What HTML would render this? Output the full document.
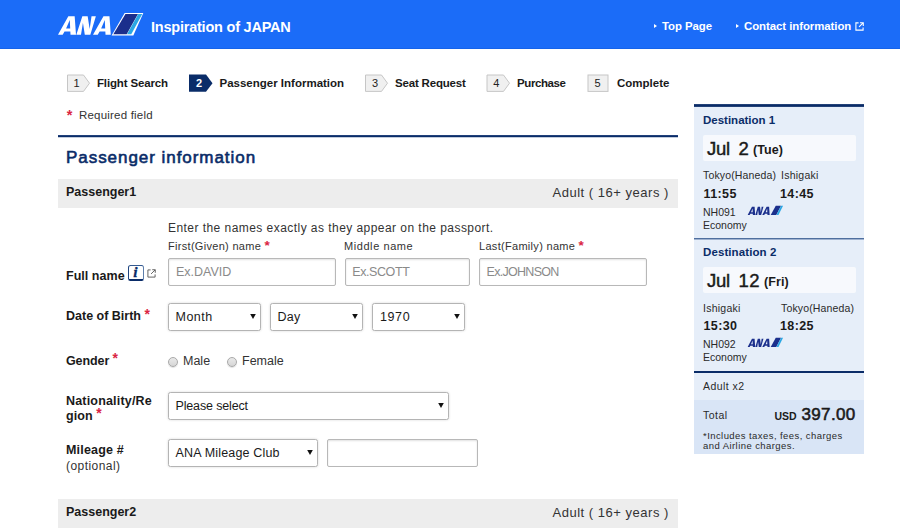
<!DOCTYPE html>
<html>
<head>
<meta charset="utf-8">
<style>
*{box-sizing:border-box;margin:0;padding:0}
html,body{width:900px;height:532px;overflow:hidden;background:#fff}
body{font-family:"Liberation Sans",sans-serif;color:#222;position:relative;font-size:12px}
.abs{position:absolute;white-space:nowrap}
#hdr{left:0;top:0;width:900px;height:49px;background:#1b6cf8;border-bottom:1px solid #1563ea}
.hl{color:#fff;font-size:11.4px;font-weight:bold;letter-spacing:-.05px}
.step{font-weight:bold;font-size:11.5px;color:#1a1a1a}
.num{font-size:11px;color:#222}
.req{color:#da2543}
.lbl .req{font-size:14px;position:relative;top:-1.5px;line-height:0;letter-spacing:0}
.bar{left:58px;width:619.5px;height:29px;background:#ededed}
.lbl{font-weight:bold;font-size:12.5px;color:#1a1a1a}
.inp{border:1px solid #b8b8b8;border-radius:2px;background:#fff;box-shadow:inset 0 1px 2px rgba(0,0,0,.12)}
.ph{color:#8a8a8a;font-size:12.5px}
.sel{border:1px solid #b4b4b4;border-radius:2.5px;background:#fff;box-shadow:0 0 2.5px rgba(0,0,0,.16)}
.st{font-size:12.5px;color:#1a1a1a}
.arr{width:5.6px;height:5px;background:#111;clip-path:polygon(0 0,100% 0,50% 100%);margin-left:.2px}
.sm{font-size:10.5px;color:#2a2a2a}
.tm{font-size:12.5px;font-weight:bold;color:#1a1a1a;letter-spacing:.4px}
.big{font-size:18.5px;color:#1a1a1a;-webkit-text-stroke:.45px #1a1a1a;letter-spacing:-.3px}
.radio{width:10px;height:10px;border-radius:50%;border:1px solid #a9a9a9;background:linear-gradient(#e9e9e9,#d6d6d6);box-shadow:0 1px 1px rgba(0,0,0,.12)}
</style>
</head>
<body>
<!-- header -->
<div id="hdr" class="abs"></div>
<svg class="abs" style="left:54px;top:10px" width="96" height="30" viewBox="0 0 1440 450">
  <g fill="#fff">
    <path fill-rule="evenodd" d="M60 370 L215 95 L310 95 L330 370 L248 370 L245 322 L158 322 L130 370 Z M181 278 L243 278 L237 150 Z"/>
    <path d="M335 370 L425 95 L505 95 L535 285 L563 95 L628 95 L545 370 L462 370 L434 190 L405 370 Z"/>
    <path fill-rule="evenodd" d="M585 370 L742 95 L832 95 L852 370 L773 370 L770 322 L684 322 L656 370 Z M707 278 L768 278 L762 150 Z"/>
    <polygon points="1060,45 1340,45 1190,381 864,381"/>
  </g>
  <polygon points="1072,60 1260,60 1090,365 890,365" fill="#1b2f8c"/>
  <polygon points="1264,60 1324,60 1159,365 1095,365" fill="#2aa7e4"/>
</svg>
<div class="abs" style="left:151px;top:19px;color:#fff;font-size:14.5px;font-weight:bold;letter-spacing:-.22px">Inspiration of JAPAN</div>
<div class="abs" style="left:654px;top:24px;width:0;height:0;border-top:2.5px solid transparent;border-bottom:2.5px solid transparent;border-left:3px solid #fff"></div>
<div class="abs hl" style="left:662px;top:20px">Top Page</div>
<div class="abs" style="left:736px;top:24px;width:0;height:0;border-top:2.5px solid transparent;border-bottom:2.5px solid transparent;border-left:3px solid #fff"></div>
<div class="abs hl" style="left:744px;top:20px">Contact information</div>
<svg class="abs" style="left:855px;top:22px" width="9" height="9" viewBox="0 0 10 10"><path d="M4 1H1v8h8V6" fill="none" stroke="#fff" stroke-width="1.2"/><path d="M5.5 0.8H9.2V4.5M9 1L4.5 5.5" fill="none" stroke="#fff" stroke-width="1.2"/></svg>

<!-- steps -->
<svg class="abs" style="left:67px;top:74px" width="610" height="18" viewBox="0 0 610 18">
  <g>
    <polygon points="0.5,1 16.5,1 22.5,9.2 16.5,17.4 0.5,17.4" fill="#f0f0f0" stroke="#c6c6c6"/>
    <polygon points="122,0.5 139,0.5 145.5,9.2 139,17.8 122,17.8" fill="#0a2c68"/>
    <polygon points="298.5,1 314.5,1 320.5,9.2 314.5,17.4 298.5,17.4" fill="#f0f0f0" stroke="#c6c6c6"/>
    <polygon points="420,1 436.5,1 442.5,9.2 436.5,17.4 420,17.4" fill="#f0f0f0" stroke="#c6c6c6"/>
    <rect x="521" y="1" width="20" height="16.4" fill="#f0f0f0" stroke="#c6c6c6"/>
  </g>
</svg>
<div class="abs num" style="left:73.5px;top:77px">1</div>
<div class="abs step" style="left:97px;top:77.4px;letter-spacing:-.15px">Flight Search</div>
<div class="abs num" style="left:196px;top:77px;color:#fff;font-weight:bold">2</div>
<div class="abs step" style="left:219.5px;top:77.4px">Passenger Information</div>
<div class="abs num" style="left:372px;top:77px">3</div>
<div class="abs step" style="left:395px;top:77.4px;letter-spacing:-.18px">Seat Request</div>
<div class="abs num" style="left:493.3px;top:77px">4</div>
<div class="abs step" style="left:517px;top:77.4px;letter-spacing:-.4px">Purchase</div>
<div class="abs num" style="left:594.5px;top:77px">5</div>
<div class="abs step" style="left:617px;top:77.4px">Complete</div>

<div class="abs req" style="left:66.8px;top:106.6px;font-size:14.5px;font-weight:bold">*</div>
<div class="abs" style="left:79px;top:109px;font-size:11.5px;color:#333;letter-spacing:.2px">Required field</div>

<!-- main -->
<div class="abs" style="left:58px;top:135px;width:619.5px;height:3px;background:linear-gradient(#21407a 0,#21407a 33%,#0a2c68 33%,#0a2c68 67%,#c3ccdc 67%)"></div>
<div class="abs" style="left:66px;top:148.4px;font-size:17px;color:#0a2c68;-webkit-text-stroke:.6px #0a2c68;letter-spacing:.95px">Passenger information</div>
<div class="abs bar" style="top:179px"></div>
<div class="abs lbl" style="left:66px;top:185.4px;font-size:12.5px">Passenger1</div>
<div class="abs" style="left:552.5px;top:185px;font-size:13px;color:#333;letter-spacing:.52px">Adult ( 16+ years )</div>

<div class="abs" style="left:168px;top:221px;font-size:12px;color:#333;letter-spacing:.45px">Enter the names exactly as they appear on the passport.</div>
<div class="abs" style="left:168px;top:240px;font-size:11px;color:#333;letter-spacing:.3px">First(Given) name <span class="req" style="font-weight:bold;font-size:13.5px;line-height:11px;position:relative;top:-.2px">*</span></div>
<div class="abs" style="left:344px;top:240px;font-size:11px;color:#333;letter-spacing:.57px">Middle name</div>
<div class="abs" style="left:479px;top:240px;font-size:11px;color:#333;letter-spacing:.3px">Last(Family) name <span class="req" style="font-weight:bold;font-size:13.5px;line-height:11px;position:relative;top:-.2px">*</span></div>

<div class="abs lbl" style="left:66px;top:268.6px;letter-spacing:.03px">Full name</div>
<div class="abs" style="left:128px;top:264.5px;width:15.5px;height:16.5px;border:1.5px solid #0a2c68;border-color:#355a90 #5d7eab #0a2c68 #1d4480;border-bottom-width:2.5px;border-radius:2.5px;background:#fff"></div>
<div class="abs" style="left:133.3px;top:263.2px;font-family:'Liberation Serif',serif;font-style:italic;font-weight:bold;font-size:15.5px;color:#0a2c68;-webkit-text-stroke:.3px #0a2c68">i</div>
<svg class="abs" style="left:147px;top:269px" width="9" height="9" viewBox="0 0 10 10"><path d="M4 1H1v8h8V6" fill="none" stroke="#555" stroke-width="1"/><path d="M5.8 0.8H9.2V4.2M9 1L4.5 5.5" fill="none" stroke="#555" stroke-width="1"/></svg>

<div class="abs inp" style="left:168px;top:258px;width:168px;height:28px"></div>
<div class="abs ph" style="left:176px;top:264.7px">Ex.DAVID</div>
<div class="abs inp" style="left:345px;top:258px;width:125px;height:28px"></div>
<div class="abs ph" style="left:352.3px;top:264.7px;letter-spacing:-.42px">Ex.SCOTT</div>
<div class="abs inp" style="left:479px;top:258px;width:168px;height:28px"></div>
<div class="abs ph" style="left:486.6px;top:264.7px;letter-spacing:-.72px">Ex.JOHNSON</div>

<div class="abs lbl" style="left:66px;top:309px;letter-spacing:0px">Date of Birth <span class="req">*</span></div>
<div class="abs sel" style="left:168px;top:303px;width:93px;height:28px"></div>
<div class="abs st" style="left:175.5px;top:309.7px;letter-spacing:.5px">Month</div>
<div class="abs arr" style="left:250px;top:314px"></div>
<div class="abs sel" style="left:270px;top:303px;width:93px;height:28px"></div>
<div class="abs st" style="left:277.5px;top:309.7px;letter-spacing:.3px">Day</div>
<div class="abs arr" style="left:352px;top:314px"></div>
<div class="abs sel" style="left:372px;top:303px;width:93px;height:28px"></div>
<div class="abs st" style="left:380px;top:309.7px;letter-spacing:.6px">1970</div>
<div class="abs arr" style="left:454px;top:314px"></div>

<div class="abs lbl" style="left:66px;top:353.6px;letter-spacing:-.1px">Gender <span class="req">*</span></div>
<div class="abs radio" style="left:168px;top:356.5px"></div>
<div class="abs st" style="left:183px;top:354px;color:#333">Male</div>
<div class="abs radio" style="left:227px;top:356.5px"></div>
<div class="abs st" style="left:242px;top:354px;color:#333">Female</div>

<div class="abs lbl" style="left:66px;top:393.6px;letter-spacing:.18px">Nationality/Re</div>
<div class="abs lbl" style="left:66px;top:408.6px;letter-spacing:.1px">gion <span class="req">*</span></div>
<div class="abs sel" style="left:168px;top:392px;width:281px;height:28px"></div>
<div class="abs st" style="left:175.5px;top:398.7px;letter-spacing:-.15px">Please select</div>
<div class="abs arr" style="left:438px;top:403px"></div>

<div class="abs lbl" style="left:66px;top:442.6px;letter-spacing:.18px">Mileage #</div>
<div class="abs" style="left:66px;top:458.5px;font-size:12px;color:#333;letter-spacing:.45px">(optional)</div>
<div class="abs sel" style="left:168px;top:439px;width:150px;height:28px"></div>
<div class="abs st" style="left:175.5px;top:445.7px;letter-spacing:.17px">ANA Mileage Club</div>
<div class="abs arr" style="left:307px;top:450px"></div>
<div class="abs inp" style="left:327px;top:439px;width:151px;height:28px"></div>

<div class="abs bar" style="top:499px"></div>
<div class="abs lbl" style="left:66px;top:505.4px;font-size:12.5px">Passenger2</div>
<div class="abs" style="left:552.5px;top:505px;font-size:13px;color:#333;letter-spacing:.52px">Adult ( 16+ years )</div>

<!-- sidebar -->
<div class="abs" style="left:694px;top:105px;width:170px;height:349px;background:#e6eef9"></div>
<div class="abs" style="left:694px;top:104px;width:170px;height:3px;background:linear-gradient(#3a5585,#0a2c68 34%,#0a2c68 66%,#3a5585)"></div>
<div class="abs" style="left:703px;top:114px;font-size:11.5px;font-weight:bold;color:#0a2c68">Destination 1</div>
<div class="abs" style="left:703px;top:135px;width:153px;height:26px;background:#f7f9fd;border-radius:2px"></div>
<div class="abs big" style="left:707px;top:137.5px">Jul</div>
<div class="abs big" style="left:738.5px;top:137.5px">2</div>
<div class="abs" style="left:753px;top:143px;font-size:12.5px;font-weight:bold;color:#1a1a1a;letter-spacing:.1px">(Tue)</div>
<div class="abs sm" style="left:703px;top:169px;letter-spacing:.15px">Tokyo(Haneda)</div>
<div class="abs sm" style="left:781px;top:169px;letter-spacing:.25px">Ishigaki</div>
<div class="abs tm" style="left:703.5px;top:187px">11:55</div>
<div class="abs tm" style="left:780px;top:187px">14:45</div>
<div class="abs sm" style="left:703px;top:206px">NH091</div>
<svg class="abs" style="left:745.5px;top:204px" width="40" height="13.5" viewBox="0 0 1440 450" preserveAspectRatio="none">
  <g fill="#1b2f8c">
    <path fill-rule="evenodd" d="M60 370 L215 95 L310 95 L330 370 L248 370 L245 322 L158 322 L130 370 Z M181 278 L243 278 L237 150 Z"/>
    <path d="M335 370 L425 95 L505 95 L535 285 L563 95 L628 95 L545 370 L462 370 L434 190 L405 370 Z"/>
    <path fill-rule="evenodd" d="M585 370 L742 95 L832 95 L852 370 L773 370 L770 322 L684 322 L656 370 Z M707 278 L768 278 L762 150 Z"/>
  </g>
  <polygon points="1072,60 1260,60 1090,365 890,365" fill="#1b2f8c"/>
  <polygon points="1264,60 1334,60 1169,365 1095,365" fill="#2aa7e4"/>
</svg>
<div class="abs sm" style="left:703px;top:218.5px">Economy</div>
<div class="abs" style="left:694px;top:238px;width:170px;height:2px;background:linear-gradient(#4f6f9f 0,#4f6f9f 50%,#9fb2d0 50%)"></div>
<div class="abs" style="left:703px;top:246px;font-size:11.5px;font-weight:bold;color:#0a2c68;letter-spacing:.1px">Destination 2</div>
<div class="abs" style="left:703px;top:267px;width:153px;height:26px;background:#f7f9fd;border-radius:2px"></div>
<div class="abs big" style="left:707px;top:269.5px">Jul</div>
<div class="abs big" style="left:738.5px;top:269.5px;letter-spacing:.4px">12</div>
<div class="abs" style="left:764px;top:275px;font-size:12.5px;font-weight:bold;color:#1a1a1a;letter-spacing:.1px">(Fri)</div>
<div class="abs sm" style="left:703px;top:301.7px;letter-spacing:.25px">Ishigaki</div>
<div class="abs sm" style="left:781px;top:301.7px;letter-spacing:.15px">Tokyo(Haneda)</div>
<div class="abs tm" style="left:703.5px;top:319px">15:30</div>
<div class="abs tm" style="left:780px;top:319px">18:25</div>
<div class="abs sm" style="left:703px;top:338px">NH092</div>
<svg class="abs" style="left:745.5px;top:336px" width="40" height="13.5" viewBox="0 0 1440 450" preserveAspectRatio="none">
  <g fill="#1b2f8c">
    <path fill-rule="evenodd" d="M60 370 L215 95 L310 95 L330 370 L248 370 L245 322 L158 322 L130 370 Z M181 278 L243 278 L237 150 Z"/>
    <path d="M335 370 L425 95 L505 95 L535 285 L563 95 L628 95 L545 370 L462 370 L434 190 L405 370 Z"/>
    <path fill-rule="evenodd" d="M585 370 L742 95 L832 95 L852 370 L773 370 L770 322 L684 322 L656 370 Z M707 278 L768 278 L762 150 Z"/>
  </g>
  <polygon points="1072,60 1260,60 1090,365 890,365" fill="#1b2f8c"/>
  <polygon points="1264,60 1334,60 1169,365 1095,365" fill="#2aa7e4"/>
</svg>
<div class="abs sm" style="left:703px;top:351px">Economy</div>
<div class="abs" style="left:694px;top:371px;width:170px;height:2.4px;background:#0a2c68"></div>
<div class="abs sm" style="left:703px;top:380px;letter-spacing:.45px">Adult x2</div>
<div class="abs" style="left:694px;top:399.5px;width:170px;height:54px;background:#d9e5f6"></div>
<div class="abs sm" style="left:703px;top:409px;letter-spacing:.5px">Total</div>
<div class="abs" style="left:774.5px;top:410px;font-size:10.5px;font-weight:bold;color:#1a1a1a">USD</div>
<div class="abs" style="left:801.5px;top:405px;font-size:17px;color:#1a1a1a;-webkit-text-stroke:.55px #1a1a1a;letter-spacing:.35px">397.00</div>
<div class="abs sm" style="left:703px;top:430.5px;font-size:9.5px;line-height:10px;letter-spacing:.43px">*Includes taxes, fees, charges<br>and Airline charges.</div>
</body>
</html>
